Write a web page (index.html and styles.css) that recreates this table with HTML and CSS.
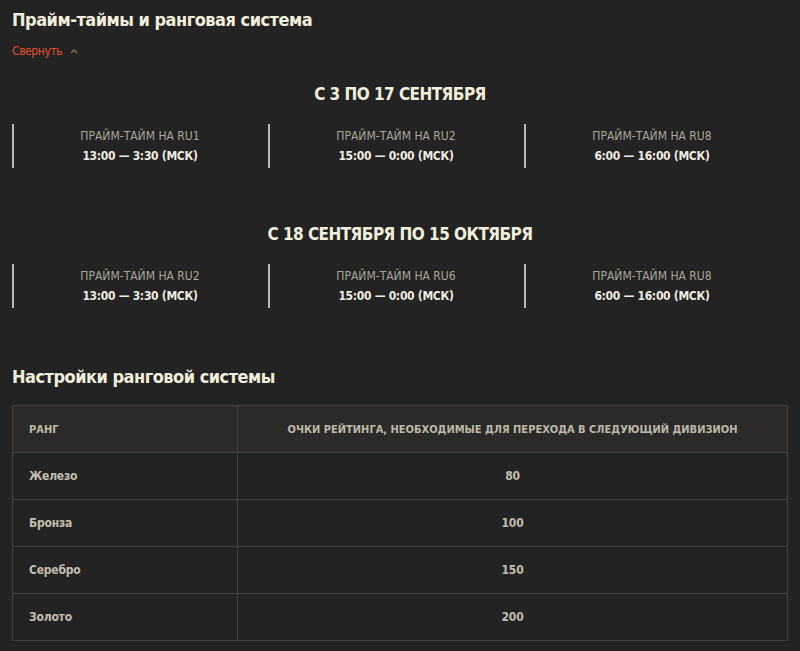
FILE: index.html
```html
<!DOCTYPE html>
<html lang="ru">
<head>
<meta charset="utf-8">
<link rel="stylesheet" href="styles.css">
</head>
<body>
<div class="page">
  <h1 class="title">Прайм-таймы и ранговая система</h1>
  <div class="collapse">Свернуть <svg class="chev" width="8" height="6" viewBox="0 0 8 6"><path d="M1 5 L4 2 L7 5" fill="none" stroke="#8a6a4a" stroke-width="1.5"/></svg></div>

  <section class="period">
    <h2 class="period-title">С 3 ПО 17 СЕНТЯБРЯ</h2>
    <div class="cols">
      <div class="col"><div class="label">ПРАЙМ-ТАЙМ НА RU1</div><div class="time">13:00 — 3:30 (МСК)</div></div>
      <div class="col"><div class="label">ПРАЙМ-ТАЙМ НА RU2</div><div class="time">15:00 — 0:00 (МСК)</div></div>
      <div class="col"><div class="label">ПРАЙМ-ТАЙМ НА RU8</div><div class="time">6:00 — 16:00 (МСК)</div></div>
    </div>
  </section>

  <section class="period period2">
    <h2 class="period-title">С 18 СЕНТЯБРЯ ПО 15 ОКТЯБРЯ</h2>
    <div class="cols">
      <div class="col"><div class="label">ПРАЙМ-ТАЙМ НА RU2</div><div class="time">13:00 — 3:30 (МСК)</div></div>
      <div class="col"><div class="label">ПРАЙМ-ТАЙМ НА RU6</div><div class="time">15:00 — 0:00 (МСК)</div></div>
      <div class="col"><div class="label">ПРАЙМ-ТАЙМ НА RU8</div><div class="time">6:00 — 16:00 (МСК)</div></div>
    </div>
  </section>

  <h1 class="title title2">Настройки ранговой системы</h1>
  <table class="ranks">
    <thead>
      <tr><th class="c1">РАНГ</th><th class="c2">ОЧКИ РЕЙТИНГА, НЕОБХОДИМЫЕ ДЛЯ ПЕРЕХОДА В СЛЕДУЮЩИЙ ДИВИЗИОН</th></tr>
    </thead>
    <tbody>
      <tr><td class="c1">Железо</td><td class="c2">80</td></tr>
      <tr><td class="c1">Бронза</td><td class="c2">100</td></tr>
      <tr><td class="c1">Серебро</td><td class="c2">150</td></tr>
      <tr><td class="c1">Золото</td><td class="c2">200</td></tr>
    </tbody>
  </table>
</div>
</body>
</html>
```

FILE: styles.css
```css
html, body {
  margin: 0;
  padding: 0;
  background: #232323;
}
body {
  font-family: "DejaVu Sans", sans-serif;
  font-stretch: condensed;
  color: #e8e4d6;
}
.page {
  padding: 8px 12px 0 12px;
}
.title {
  margin: 0;
  font-size: 18px;
  line-height: 24px;
  font-weight: bold;
  color: #f2eedc;
  letter-spacing: -0.5px;
}
.collapse {
  margin-top: 12px;
  font-size: 12px;
  line-height: 14px;
  color: #e0502b;
  letter-spacing: -0.4px;
  display: flex;
  align-items: center;
  gap: 8px;
}
.period {
  margin-top: 24px;
}
.period2 {
  margin-top: 54px;
}
.period-title {
  margin: 0;
  text-align: center;
  font-size: 17px;
  line-height: 24px;
  font-weight: bold;
  color: #f2eedc;
  letter-spacing: -0.55px;
}
.cols {
  margin-top: 18px;
  display: grid;
  grid-template-columns: repeat(3, 256px);
}
.col {
  border-left: 2px solid #bdbbb3;
  height: 44px;
  display: flex;
  flex-direction: column;
  justify-content: center;
  align-items: center;
  gap: 6px;
  padding-right: 2px;
}
.label {
  font-size: 12px;
  line-height: 14px;
  color: #a9a699;
}
.time {
  font-size: 12px;
  line-height: 14px;
  color: #f0ece0;
  font-weight: bold;
  letter-spacing: -0.3px;
}
.title2 {
  margin-top: 57px;
}
.ranks {
  margin-top: 16px;
  width: 776px;
  border-collapse: collapse;
  font-size: 12px;
}
.ranks th, .ranks td {
  border: 1px solid #434240;
  height: 46px;
  padding: 0 16px;
}
.ranks th {
  background: #2b2a28;
  color: #bdb9a9;
  font-weight: bold;
  font-size: 11px;
  white-space: nowrap;
}
.ranks td {
  color: #c2beae;
  font-weight: bold;
  letter-spacing: -0.2px;
}
.ranks .c1 {
  width: 192px;
  text-align: left;
}
.ranks .c2 {
  text-align: center;
}
```
